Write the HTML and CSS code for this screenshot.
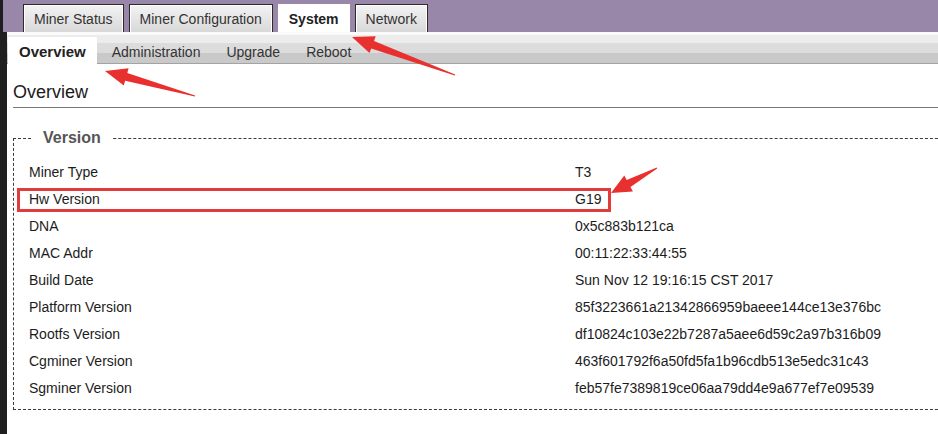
FILE: index.html
```html
<!DOCTYPE html>
<html lang="en">
<head>
<meta charset="utf-8">
<title>System - Overview</title>
<link rel="stylesheet" href="styles.css">
</head>
<body>
<div class="page">
  <header class="topbar">
    <nav class="main-tabs">
      <a class="main-tab">Miner Status</a>
      <a class="main-tab">Miner Configuration</a>
      <a class="main-tab active">System</a>
      <a class="main-tab">Network</a>
    </nav>
  </header>
  <div class="subbar">
    <nav class="sub-tabs">
      <a class="sub-tab active">Overview</a>
      <a class="sub-tab">Administration</a>
      <a class="sub-tab">Upgrade</a>
      <a class="sub-tab">Reboot</a>
    </nav>
  </div>
  <main class="content">
    <h2 class="page-title">Overview</h2>
    <fieldset class="version">
      <legend>Version</legend>
      <div class="rows">
        <div class="row"><span class="label">Miner Type</span><span class="value">T3</span></div>
        <div class="row"><span class="label">Hw Version</span><span class="value">G19</span></div>
        <div class="row"><span class="label">DNA</span><span class="value">0x5c883b121ca</span></div>
        <div class="row"><span class="label">MAC Addr</span><span class="value">00:11:22:33:44:55</span></div>
        <div class="row"><span class="label">Build Date</span><span class="value">Sun Nov 12 19:16:15 CST 2017</span></div>
        <div class="row"><span class="label">Platform Version</span><span class="value">85f3223661a21342866959baeee144ce13e376bc</span></div>
        <div class="row"><span class="label">Rootfs Version</span><span class="value">df10824c103e22b7287a5aee6d59c2a97b316b09</span></div>
        <div class="row"><span class="label">Cgminer Version</span><span class="value">463f601792f6a50fd5fa1b96cdb513e5edc31c43</span></div>
        <div class="row"><span class="label">Sgminer Version</span><span class="value">feb57fe7389819ce06aa79dd4e9a677ef7e09539</span></div>
      </div>
    </fieldset>
  </main>
</div>
<svg class="annotations" width="938" height="434" viewBox="0 0 938 434" xmlns="http://www.w3.org/2000/svg">
  <rect x="18.5" y="189.5" width="591" height="21" fill="none" stroke="#e23b3b" stroke-width="3"/>
  <polygon fill="#e8312f" points="455.2,74.5 374,40.9 375.7,36.2 352,37 369.5,53 371.2,48.4 454.8,75.5"/>
  <polygon fill="#e8312f" points="195.1,95.5 127.3,73 128.6,68.2 105,71 123.8,85.6 125.1,80.8 194.9,96.5"/>
  <polygon fill="#e8312f" points="656.8,167.6 626.7,179.9 624.3,175.5 611,193 632.9,191.4 630.5,187 657.2,168.4"/>
</svg>
</body>
</html>
```
FILE: styles.css
```css
html, body {
  margin: 0;
  height: 100%;
}
body {
  background: #1f1f1f;
  font-family: "Liberation Sans", Arial, sans-serif;
  color: #1c1c1c;
  overflow: hidden;
  position: relative;
}
.page {
  margin-left: 7px;
  background: #fff;
  min-height: 434px;
}
.topbar {
  background: #9887a9;
  height: 32px;
  margin-left: -4px;
  padding-left: 20px;
  display: flex;
  align-items: flex-end;
  box-sizing: border-box;
}
.main-tabs {
  display: flex;
  gap: 5px;
}
.main-tab {
  height: 28px;
  box-sizing: border-box;
  padding: 0 10px;
  border: 1px solid #2b2b2b;
  border-bottom: none;
  background: linear-gradient(#f3f3f3, #d8d8d8);
  box-shadow: inset 1px 1px 0 #fff, inset -1px 0 0 #fff;
  font-size: 14px;
  line-height: 28px;
  color: #333;
}
.main-tab.active {
  background: #fff;
  border-color: #fff;
  box-shadow: none;
  font-weight: bold;
  color: #222;
}
.subbar {
  height: 32px;
  background: linear-gradient(#fafafa 0, #fafafa 9%, #ececec 10%, #ececec 34%, #dcdcdc 36%, #dcdcdc 64%, #c9c9c9 66%, #c9c9c9 96%, #a3a3a3 97%, #a3a3a3 100%);
  display: flex;
  align-items: flex-end;
  padding-left: 1px;
}
.sub-tabs {
  display: flex;
  gap: 4px;
}
.sub-tab {
  height: 27px;
  box-sizing: border-box;
  padding: 3px 11px 0;
  font-size: 14px;
  line-height: 24px;
  color: #333;
}
.sub-tab.active {
  background: #fff;
  font-weight: bold;
  font-size: 15px;
  color: #222;
}
.content {
  padding: 17px 0 0 6px;
}
.page-title {
  margin: 0;
  font-size: 18px;
  font-weight: normal;
  line-height: 22px;
  padding-bottom: 4px;
  border-bottom: 1px solid #777;
  color: #1a1a1a;
}
.version {
  margin: 21px -30px 0 0;
  padding: 0 0 8px 15px;
  border: 1px dashed #3a3a3a;
  min-width: 0;
}
.version legend {
  margin-left: 4px;
  padding: 0 11px 0 10px;
  font-size: 16px;
  font-weight: bold;
  color: #555;
  line-height: 18px;
}
.rows {
  padding-top: 11px;
}
.row {
  display: grid;
  grid-template-columns: 546px auto;
  height: 27px;
  align-items: center;
  font-size: 14px;
  color: #1c1c1c;
}
.annotations {
  position: absolute;
  left: 0;
  top: 0;
  pointer-events: none;
}
```
